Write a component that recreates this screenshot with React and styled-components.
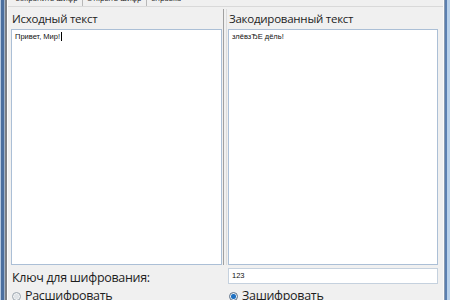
import React from "react";
import styled, { createGlobalStyle } from "styled-components";

const Global = createGlobalStyle`
  html, body { margin: 0; padding: 0; overflow: hidden; background: #b9d1ea; }
  #root { width: 450px; height: 300px; }
`;

const Window = styled.div`
  width: 450px;
  height: 300px;
  box-sizing: border-box;
  padding: 0 7px 0 8px;
  background: #f0f0f0;
  display: flex;
  flex-direction: column;
  overflow: hidden;
  box-shadow:
    inset 1px 0 #b4c8e0,
    inset 4px 0 #4b6f9f,
    inset 5px 0 #9fb2c8,
    inset 7px 0 #7d7f83,
    inset 8px 0 #fdfdfd,
    inset -3px 0 #b9d1ea,
    inset -5px 0 #5b7fb0,
    inset -6px 0 #8a9bb0,
    inset -7px 0 #fafafa;
`;

const MenuBar = styled.div`
  height: 6px;
  flex: none;
  display: flex;
  align-items: flex-end;
  overflow: hidden;
  padding-left: 3px;
  background: #f0f0f0;
  border-bottom: 1px solid #d9d9d9;
  font-family: "Open Sans", "Noto Sans", sans-serif;
  font-size: 7.5px;
  color: #1e1e1e;
`;

const MenuItem = styled.div`
  flex: none;
  height: 18px;
  line-height: 21px;
  padding: 0 4px;
  white-space: nowrap;
  border-right: ${(p) => (p.$sep ? "1px solid #b8b8b8" : "none")};
`;

const Main = styled.div`
  flex: 1;
  display: grid;
  grid-template-columns: 211px 6px 1fr;
  grid-template-rows: 22px 236px 19px 1fr;
  padding: 0 5px 0 3px;
  font-family: "Open Sans", "Noto Sans", sans-serif;
  color: #1e1e1e;
`;

const Caption = styled.div`
  grid-column: ${(p) => p.$col};
  font-size: 11.5px;
  letter-spacing: -0.25px;
  padding: 4px 0 0 ${(p) => p.$indent}px;
  line-height: 16px;
  white-space: nowrap;
`;

const TextBox = styled.div`
  grid-column: ${(p) => p.$col};
  box-sizing: border-box;
  background: #fff;
  border: 1px solid #abbfd6;
  padding: 2px 3px;
  font-family: "Liberation Sans", Arial, sans-serif;
  font-size: 7.5px;
  line-height: 9px;
  color: #111;
`;

const Caret = styled.span`
  display: inline-block;
  width: 1px;
  height: 9px;
  background: #000;
  vertical-align: -2px;
  margin-left: 1px;
`;

const Splitter = styled.div`
  grid-column: 2;
  grid-row: 1 / 3;
  display: flex;
  justify-content: center;
`;

const SplitLine = styled.div`
  width: 2px;
  margin-top: 2px;
  border-left: 1px solid #a0a0a0;
  border-right: 1px solid #dcdcdc;
`;

const KeyLabel = styled.div`
  grid-column: 1;
  font-size: 12.5px;
  letter-spacing: -0.3px;
  line-height: 16px;
  padding-top: 5px;
  padding-left: 1px;
  white-space: nowrap;
`;

const KeyInput = styled.div`
  grid-column: 3;
  align-self: end;
  height: 16px;
  box-sizing: border-box;
  background: #fff;
  border: 1px solid #c5d1de;
  padding: 0 3px;
  font-family: "Liberation Sans", Arial, sans-serif;
  font-size: 7.5px;
  line-height: 14px;
  color: #111;
`;

const RadioRow = styled.div`
  grid-column: ${(p) => p.$col};
  display: flex;
  align-items: center;
  gap: 4px;
  padding-left: ${(p) => p.$indent}px;
  padding-top: 4px;
  align-self: start;
  font-size: 12.5px;
  letter-spacing: -0.3px;
  line-height: 16px;
  white-space: nowrap;
`;

const RadioDot = styled.span`
  flex: none;
  width: 9px;
  height: 9px;
  box-sizing: border-box;
  border-radius: 50%;
  border: 1px solid ${(p) => (p.$on ? "#5b6f87" : "#9aa4ae")};
  background: ${(p) =>
    p.$on
      ? "radial-gradient(circle, #1f6fbf 0 2px, #5ea0de 2.5px, #e9eef3 3px)"
      : "radial-gradient(circle, #dfe3e7 0 2px, #f2f3f4 3px)"};
`;

export default function App() {
  return (
    <>
      <Global />
      <Window>
        <MenuBar>
          <MenuItem $sep>Сохранить шифр</MenuItem>
          <MenuItem $sep>Открыть шифр</MenuItem>
          <MenuItem>Справка</MenuItem>
        </MenuBar>
        <Main>
          <Caption $col={1} $indent={1}>Исходный текст</Caption>
          <Splitter>
            <SplitLine />
          </Splitter>
          <Caption $col={3} $indent={1}>Закодированный текст</Caption>
          <TextBox $col={1}>
            Привет, Мир!<Caret />
          </TextBox>
          <TextBox $col={3}>злёвзЂЕ дёль!</TextBox>
          <KeyLabel>Ключ для шифрования:</KeyLabel>
          <KeyInput>123</KeyInput>
          <RadioRow $col={1} $indent={1}>
            <RadioDot />
            Расшифровать
          </RadioRow>
          <RadioRow $col={3} $indent={1}>
            <RadioDot $on />
            Зашифровать
          </RadioRow>
        </Main>
      </Window>
    </>
  );
}
